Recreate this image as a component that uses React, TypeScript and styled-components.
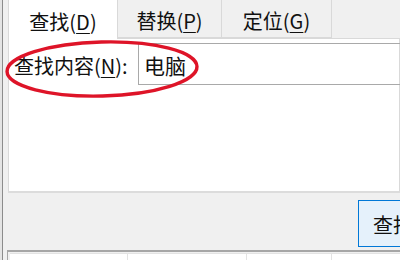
import React from 'react';
import styled, { createGlobalStyle } from 'styled-components';

const GlobalStyle = createGlobalStyle`
  html, body {
    margin: 0;
    padding: 0;
    background: #f0f0f0;
  }
  body {
    font-family: 'Noto Sans CJK SC', 'Noto Sans', sans-serif;
  }
`;

const Screen = styled.div`
  position: relative;
  width: 400px;
  height: 260px;
  overflow: hidden;
  display: flex;
  background: #f0f0f0;
  color: #111;
  font-size: 20px;
`;

const WindowEdge = styled.div`
  width: 8px;
  flex-shrink: 0;
  box-sizing: border-box;
  border-left: 2px solid #e4e4e4;
  position: relative;
  &::after {
    content: '';
    position: absolute;
    left: 0;
    top: 0;
    bottom: 0;
    width: 1px;
    background: #8c8c8c;
  }
`;

const Main = styled.div`
  flex: 1;
  display: flex;
  flex-direction: column;
  min-width: 0;
`;

const TabBar = styled.div`
  display: flex;
  height: 39px;
  flex-shrink: 0;
  border-bottom: 1px solid #d9d9d9;
  box-sizing: border-box;
  align-items: flex-end;
`;

const Tab = styled.div<{ $width: number; $active?: boolean }>`
  width: ${(p) => p.$width}px;
  height: ${(p) => (p.$active ? 40 : 39)}px;
  margin-bottom: ${(p) => (p.$active ? -1 : 0)}px;
  box-sizing: border-box;
  display: flex;
  align-items: center;
  justify-content: center;
  padding-top: 5px;
  background: ${(p) => (p.$active ? '#ffffff' : '#f0f0f0')};
  border: 1px solid #d9d9d9;
  border-bottom: ${(p) => (p.$active ? 'none' : '1px solid #d9d9d9')};
  border-left: ${(p) => (p.$active ? '1px solid #d9d9d9' : 'none')};
  line-height: 1;
  white-space: nowrap;
`;

const Key = styled.span`
  text-decoration: underline;
  text-underline-offset: 3px;
  text-decoration-thickness: 1px;
`;

const Panel = styled.div`
  height: 154px;
  flex-shrink: 0;
  box-sizing: border-box;
  background: #ffffff;
  border: 1px solid #d9d9d9;
  border-top: none;
  border-bottom: 2px solid #dcdcdc;
  padding: 4px 0 0 5px;
`;

const FieldRow = styled.div`
  display: flex;
  align-items: center;
`;

const Label = styled.label`
  width: 124px;
  flex-shrink: 0;
  line-height: 1;
  white-space: nowrap;
  padding-top: 3px;
`;

const Input = styled.div`
  flex: 1;
  height: 42px;
  box-sizing: border-box;
  margin-right: -20px;
  border: 1px solid #a9a9a9;
  display: flex;
  align-items: center;
  padding: 3px 0 0 5px;
  font-size: 21px;
  line-height: 1;
`;

const Footer = styled.div`
  height: 57px;
  flex-shrink: 0;
  display: flex;
  justify-content: flex-end;
  align-items: flex-start;
  padding-top: 7px;
  box-sizing: border-box;
`;

const Button = styled.div`
  width: 60px;
  margin-right: -18px;
  height: 47px;
  box-sizing: border-box;
  background: #e5f1fb;
  border: 1px solid #0078d7;
  display: flex;
  align-items: center;
  padding: 3px 0 0 14px;
  line-height: 1;
  white-space: nowrap;
`;

const Table = styled.div`
  flex: 1;
  border-top: 2px solid #a6a6a6;
  border-left: 1px solid #a6a6a6;
  margin-left: -1px;
  background: #f0f0f0;
  padding: 1px 0 0 2px;
  display: flex;
`;

const Column = styled.div<{ $width: number }>`
  width: ${(p) => p.$width}px;
  flex-shrink: 0;
  background: #ffffff;
  border-right: 1px solid #e3e3e3;
  border-top: 1px solid #e3e3e3;
`;

const Highlight = styled.svg`
  position: absolute;
  left: 0;
  top: 0;
  pointer-events: none;
`;

export default function App() {
  return (
    <>
      <GlobalStyle />
      <Screen>
        <WindowEdge />
        <Main>
          <TabBar>
            <Tab $width={110} $active>
              查找(<Key>D</Key>)
            </Tab>
            <Tab $width={104}>
              替换(<Key>P</Key>)
            </Tab>
            <Tab $width={110}>
              定位(<Key>G</Key>)
            </Tab>
          </TabBar>
          <Panel>
            <FieldRow>
              <Label>
                查找内容(<Key>N</Key>):
              </Label>
              <Input>电脑</Input>
            </FieldRow>
          </Panel>
          <Footer>
            <Button>查找</Button>
          </Footer>
          <Table>
            <Column $width={117} />
            <Column $width={118} />
            <Column $width={84} />
            <Column $width={90} />
          </Table>
        </Main>
        <Highlight width="400" height="260" viewBox="0 0 400 260">
          <ellipse
            cx="102"
            cy="69"
            rx="95"
            ry="27"
            fill="none"
            stroke="#de1428"
            strokeWidth="3.4"
            transform="rotate(-1.5 102 69)"
          />
        </Highlight>
      </Screen>
    </>
  );
}
